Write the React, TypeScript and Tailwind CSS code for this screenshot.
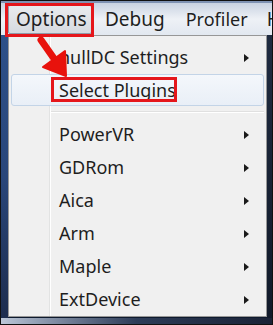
import React from "react";

const Arrow = () => (
  <svg width="7" height="10" viewBox="0 0 7 10" className="block">
    <path d="M1 1 L6 5 L1 9 Z" fill="#1a1a1a" />
  </svg>
);

const items = ["PowerVR", "GDRom", "Aica", "Arm", "Maple", "ExtDevice"];

export default function App() {
  return (
    <div
      className="relative w-[273px] h-[325px] overflow-hidden bg-[#0e1a2e] border border-[#111] flex flex-col"
      style={{ fontFamily: '"Noto Sans", "Open Sans", sans-serif' }}
    >
      {/* menubar */}
      <div className="h-[34px] shrink-0 flex items-center bg-gradient-to-b from-[#c9d3e2] via-[#eef1f6] to-[#e2e8f0] border-t-2 border-[#7f93b4] text-[19px] text-[#1e1e1e] whitespace-nowrap">
        <div className="ml-[7px] h-[29px] w-[84px] shrink-0 flex items-center pl-[7px] rounded-[2px] border border-[#8f9aa9] bg-gradient-to-b from-[#e9ebee] to-[#d6dae0]">
          Options
        </div>
        <div className="ml-[13px] shrink-0">Debug</div>
        <div className="ml-[21px] shrink-0 text-[18px]">Profiler</div>
        <div className="ml-[19px] shrink-0">H</div>
      </div>

      <div className="flex flex-1 min-h-0">
        {/* left window strip */}
        <div className="w-[7px] shrink-0 bg-gradient-to-b from-[#2d5089] via-[#29467a] to-[#1d2d4e]" />
        {/* popup menu */}
        <div className="w-[259px] shrink-0 h-[282px] bg-[#f0f0f0] border border-[#979797] relative pt-[5px] text-[18px] text-[#1e1e1e]">
          {/* gutter line */}
          <div className="absolute left-[40px] top-0 bottom-0 w-[2px] border-l border-[#e2e3e3] border-r-white border-r" />
          <div className="h-[33px] flex items-center relative">
            <span className="ml-[50px] flex-1">nullDC Settings</span>
            <span className="mr-[16px]"><Arrow /></span>
          </div>
          <div className="h-[32px] mx-[2px] flex items-center relative rounded-[3px] border border-[#c3d4e7] bg-gradient-to-b from-[#f4f7fb] to-[#e9eff7]">
            <span className="ml-[47px] flex-1">Select Plugins</span>
          </div>
          <div className="h-[12px] flex items-center">
            <div className="ml-[42px] mr-[2px] flex-1 h-[2px] border-t border-[#e0e0e0] border-b border-b-white" />
          </div>
          {items.map((t) => (
            <div key={t} className="h-[33px] flex items-center relative">
              <span className="ml-[50px] flex-1">{t}</span>
              <span className="mr-[16px]"><Arrow /></span>
            </div>
          ))}
        </div>
        <div className="flex-1 bg-gradient-to-b from-[#1f2b40] to-[#111a2a]" />
      </div>
      <div className="h-[6px] shrink-0 bg-gradient-to-r from-[#bcc7d8] via-[#2d3c58] to-[#1a2236]" />

      {/* red annotation boxes */}
      <div className="absolute left-[4px] top-[2px] w-[89px] h-[34px] border-[3px] border-[#e5161b]" />
      <div className="absolute left-[50px] top-[76px] w-[126px] h-[25px] border-[3px] border-[#e5161b]" />
      {/* red arrow */}
      <svg className="absolute left-0 top-0" width="273" height="325" viewBox="0 0 273 325">
        <line x1="40" y1="39" x2="54" y2="59" stroke="#e8120c" strokeWidth="7" strokeLinecap="round" />
        <path d="M42 66 L64 50 L65 75 Z" fill="#e8120c" stroke="#e8120c" strokeWidth="2" strokeLinejoin="round" />
      </svg>
    </div>
  );
}
